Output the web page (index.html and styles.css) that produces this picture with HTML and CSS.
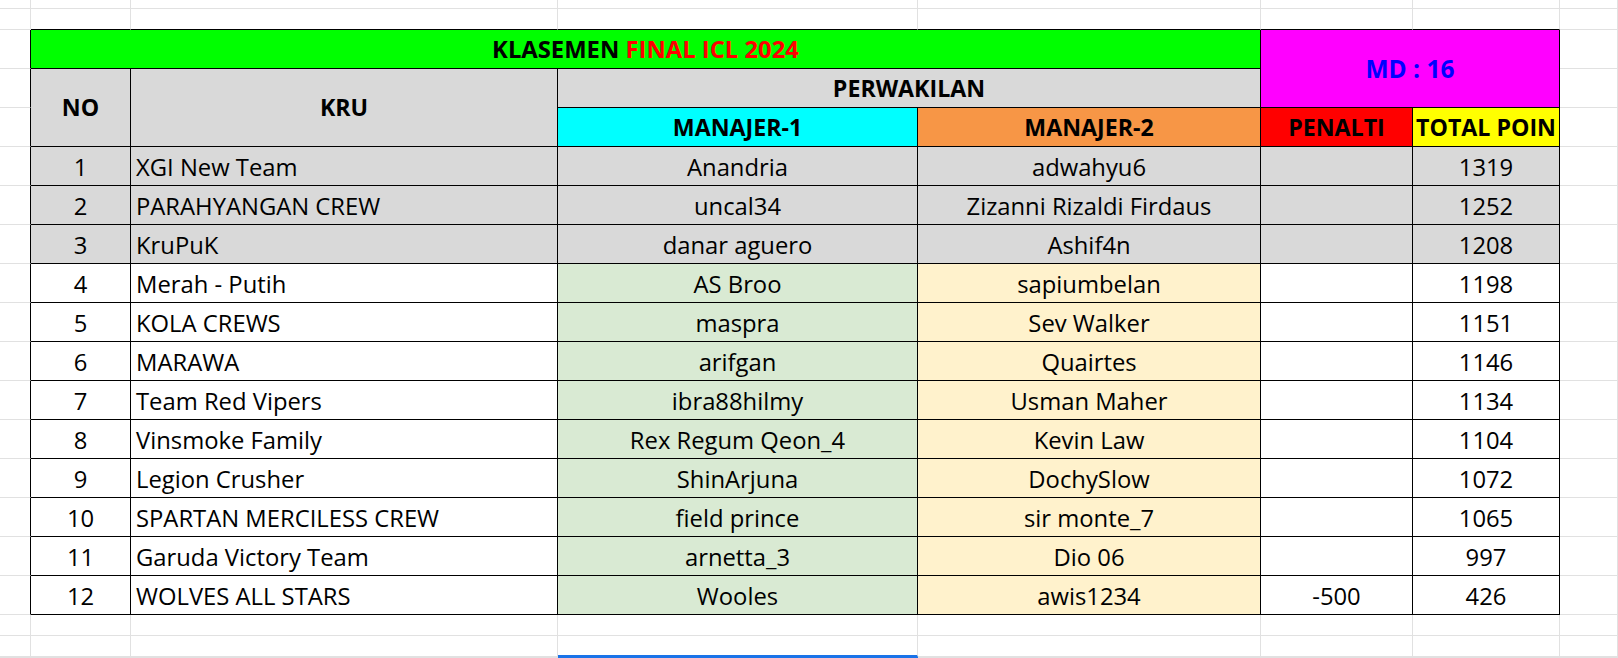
FILE: index.html
```html
<!DOCTYPE html>
<html>
<head>
<meta charset="utf-8">
<link rel="stylesheet" href="styles.css">
</head>
<body>
<div class="sheet">
  <!-- row 0 -->
  <div class="c"></div><div class="c"></div><div class="c"></div><div class="c"></div><div class="c"></div><div class="c"></div><div class="c"></div><div class="c"></div>
  <!-- row 1 (above table) -->
  <div class="c"></div><div class="c top"></div><div class="c top"></div><div class="c top"></div><div class="c top"></div><div class="c top"></div><div class="c top"></div><div class="c"></div>

  <!-- header row 1 -->
  <div class="c edge"></div>
  <div class="t hd title span4">KLASEMEN&nbsp;<span class="red">FINAL ICL 2024</span></div>
  <div class="t hd md span2 rspan2">MD : 16</div>
  <div class="c"></div>
  <!-- header row 2 -->
  <div class="c edge"></div>
  <div class="t hd gray rspan2">NO</div>
  <div class="t hd gray rspan2">KRU</div>
  <div class="t hd gray span2">PERWAKILAN</div>
  <div class="c"></div>
  <!-- header row 3 -->
  <div class="c edge"></div>
  <div class="t hd cyan">MANAJER-1</div>
  <div class="t hd orange">MANAJER-2</div>
  <div class="t hd red-bg">PENALTI</div>
  <div class="t hd yellow">TOTAL POIN</div>
  <div class="c"></div>

  <!-- data rows -->
  <div class="c edge"></div><div class="t gray">1</div><div class="t gray left">XGI New Team</div><div class="t gray">Anandria</div><div class="t gray">adwahyu6</div><div class="t gray"></div><div class="t gray">1319</div><div class="c"></div>
  <div class="c edge"></div><div class="t gray">2</div><div class="t gray left">PARAHYANGAN CREW</div><div class="t gray">uncal34</div><div class="t gray">Zizanni Rizaldi Firdaus</div><div class="t gray"></div><div class="t gray">1252</div><div class="c"></div>
  <div class="c edge"></div><div class="t gray">3</div><div class="t gray left">KruPuK</div><div class="t gray">danar aguero</div><div class="t gray">Ashif4n</div><div class="t gray"></div><div class="t gray">1208</div><div class="c"></div>
  <div class="c edge"></div><div class="t">4</div><div class="t left">Merah - Putih</div><div class="t m1">AS Broo</div><div class="t m2">sapiumbelan</div><div class="t"></div><div class="t">1198</div><div class="c"></div>
  <div class="c edge"></div><div class="t">5</div><div class="t left">KOLA CREWS</div><div class="t m1">maspra</div><div class="t m2">Sev Walker</div><div class="t"></div><div class="t">1151</div><div class="c"></div>
  <div class="c edge"></div><div class="t">6</div><div class="t left">MARAWA</div><div class="t m1">arifgan</div><div class="t m2">Quairtes</div><div class="t"></div><div class="t">1146</div><div class="c"></div>
  <div class="c edge"></div><div class="t">7</div><div class="t left">Team Red Vipers</div><div class="t m1">ibra88hilmy</div><div class="t m2">Usman Maher</div><div class="t"></div><div class="t">1134</div><div class="c"></div>
  <div class="c edge"></div><div class="t">8</div><div class="t left">Vinsmoke Family</div><div class="t m1">Rex Regum Qeon_4</div><div class="t m2">Kevin Law</div><div class="t"></div><div class="t">1104</div><div class="c"></div>
  <div class="c edge"></div><div class="t">9</div><div class="t left">Legion Crusher</div><div class="t m1">ShinArjuna</div><div class="t m2">DochySlow</div><div class="t"></div><div class="t">1072</div><div class="c"></div>
  <div class="c edge"></div><div class="t">10</div><div class="t left">SPARTAN MERCILESS CREW</div><div class="t m1">field prince</div><div class="t m2">sir monte_7</div><div class="t"></div><div class="t">1065</div><div class="c"></div>
  <div class="c edge"></div><div class="t">11</div><div class="t left">Garuda Victory Team</div><div class="t m1">arnetta_3</div><div class="t m2">Dio 06</div><div class="t"></div><div class="t">997</div><div class="c"></div>
  <div class="c edge"></div><div class="t">12</div><div class="t left">WOLVES ALL STARS</div><div class="t m1">Wooles</div><div class="t m2">awis1234</div><div class="t">-500</div><div class="t">426</div><div class="c"></div>

  <!-- rows below table -->
  <div class="c"></div><div class="c"></div><div class="c"></div><div class="c"></div><div class="c"></div><div class="c"></div><div class="c"></div><div class="c"></div>
  <div class="c"></div><div class="c"></div><div class="c"></div><div class="c sel-top"></div><div class="c"></div><div class="c"></div><div class="c"></div><div class="c"></div>
  <div class="c"></div><div class="c"></div><div class="c"></div><div class="c sel"></div><div class="c"></div><div class="c"></div><div class="c"></div><div class="c"></div>
</div>
</body>
</html>
```

FILE: styles.css
```css
html, body {
  margin: 0;
  padding: 0;
  background: #ffffff;
  overflow: hidden;
}

body {
  width: 1618px;
  height: 658px;
  font-family: "Open Sans", "Lato", sans-serif;
  font-size: 23.8px;
  color: #000000;
}

.sheet {
  display: grid;
  grid-template-columns: 31px 100px 427px 360px 343px 152px 147px 1fr;
  grid-template-rows: 9px 21px repeat(15, 39px) 21px 21px 1fr;
  width: 1618px;
  height: 658px;
}

.c {
  box-sizing: border-box;
  border-right: 1px solid #e1e1e1;
  border-bottom: 1px solid #e1e1e1;
}

.c.top {
  border-bottom-color: #000000;
}

.c.edge {
  border-right-color: #000000;
}

.c.sel-top {
  border-bottom: 2px solid #1a73e8;
}

.c.sel {
  background: #1a73e8;
  border: none;
}

.t {
  box-sizing: border-box;
  border-right: 1px solid #000000;
  border-bottom: 1px solid #000000;
  display: flex;
  align-items: center;
  justify-content: center;
  padding-top: 3px;
  white-space: nowrap;
  overflow: visible;
  line-height: 1;
}

.t.left {
  justify-content: flex-start;
  padding-left: 5px;
}

.hd {
  font-weight: 700;
  font-size: 23.2px;
  padding-top: 1px;
}

.hd.title {
  font-size: 23.8px;
}

.hd.md {
  font-size: 24.5px;
}

.span4 { grid-column: span 4; }
.span2 { grid-column: span 2; }
.rspan2 { grid-row: span 2; }

.title { background: #00ff00; }
.red { color: #ff0000; }
.md { background: #ff00ff; color: #0000ff; }
.gray { background: #d9d9d9; }
.cyan { background: #00ffff; }
.orange { background: #f79646; }
.red-bg { background: #ff0000; }
.yellow { background: #ffff00; }
.m1 { background: #d9ead3; }
.m2 { background: #fff2cc; }
```
